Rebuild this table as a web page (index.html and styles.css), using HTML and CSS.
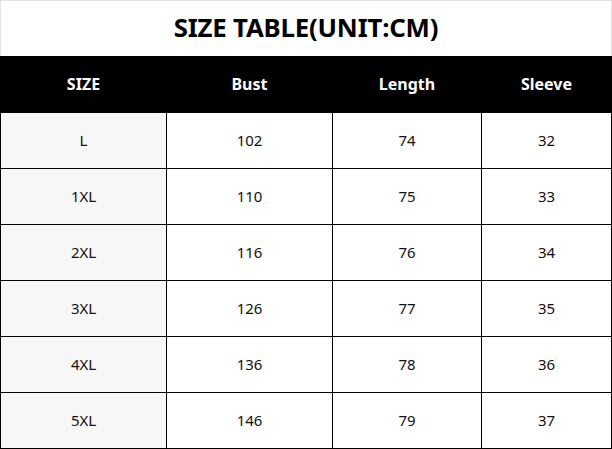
FILE: index.html
```html
<!DOCTYPE html>
<html>
<head>
<meta charset="utf-8">
<link rel="stylesheet" href="styles.css">
</head>
<body>
<div class="sheet">
  <div class="title">SIZE TABLE(UNIT:CM)</div>
  <div class="grid">
    <div class="hd">SIZE</div><div class="hd">Bust</div><div class="hd">Length</div><div class="hd">Sleeve</div>
    <div class="c first">L</div><div class="c">102</div><div class="c">74</div><div class="c">32</div>
    <div class="c first">1XL</div><div class="c">110</div><div class="c">75</div><div class="c">33</div>
    <div class="c first">2XL</div><div class="c">116</div><div class="c">76</div><div class="c">34</div>
    <div class="c first">3XL</div><div class="c">126</div><div class="c">77</div><div class="c">35</div>
    <div class="c first">4XL</div><div class="c">136</div><div class="c">78</div><div class="c">36</div>
    <div class="c first">5XL</div><div class="c">146</div><div class="c">79</div><div class="c">37</div>
  </div>
</div>
</body>
</html>
```
FILE: styles.css
```css
html, body { margin: 0; padding: 0; background: #fff; }
.sheet {
  width: 612px;
  height: 449px;
  font-family: "Noto Sans", "Noto Sans CJK SC", sans-serif;
  color: #111;
}
.title {
  border-top: 1px solid #e2e2e2;
  border-left: 1px solid #e2e2e2;
  border-right: 1px solid #e2e2e2;
  box-sizing: border-box;
  height: 56px;
  display: flex;
  align-items: center;
  justify-content: center;
  font-size: 25.8px;
  font-weight: 700;
  letter-spacing: -0.2px;
  color: #000;
  padding-bottom: 3px;
}
.grid {
  display: grid;
  grid-template-columns: 165px 165px 148px 129px;
  grid-template-rows: 56px repeat(6, 55px);
  column-gap: 1px;
  row-gap: 1px;
  background: #000;
  padding: 0 1px 1px 1px;
}
.hd {
  background: #000;
  color: #fff;
  font-weight: 700;
  font-size: 16px;
  display: flex;
  align-items: center;
  justify-content: center;
  padding-bottom: 1px;
}
.c {
  background: #fff;
  font-size: 15px;
  display: flex;
  align-items: center;
  justify-content: center;
  padding-bottom: 2px;
}
.c.first { background: #f7f7f7; }
```
